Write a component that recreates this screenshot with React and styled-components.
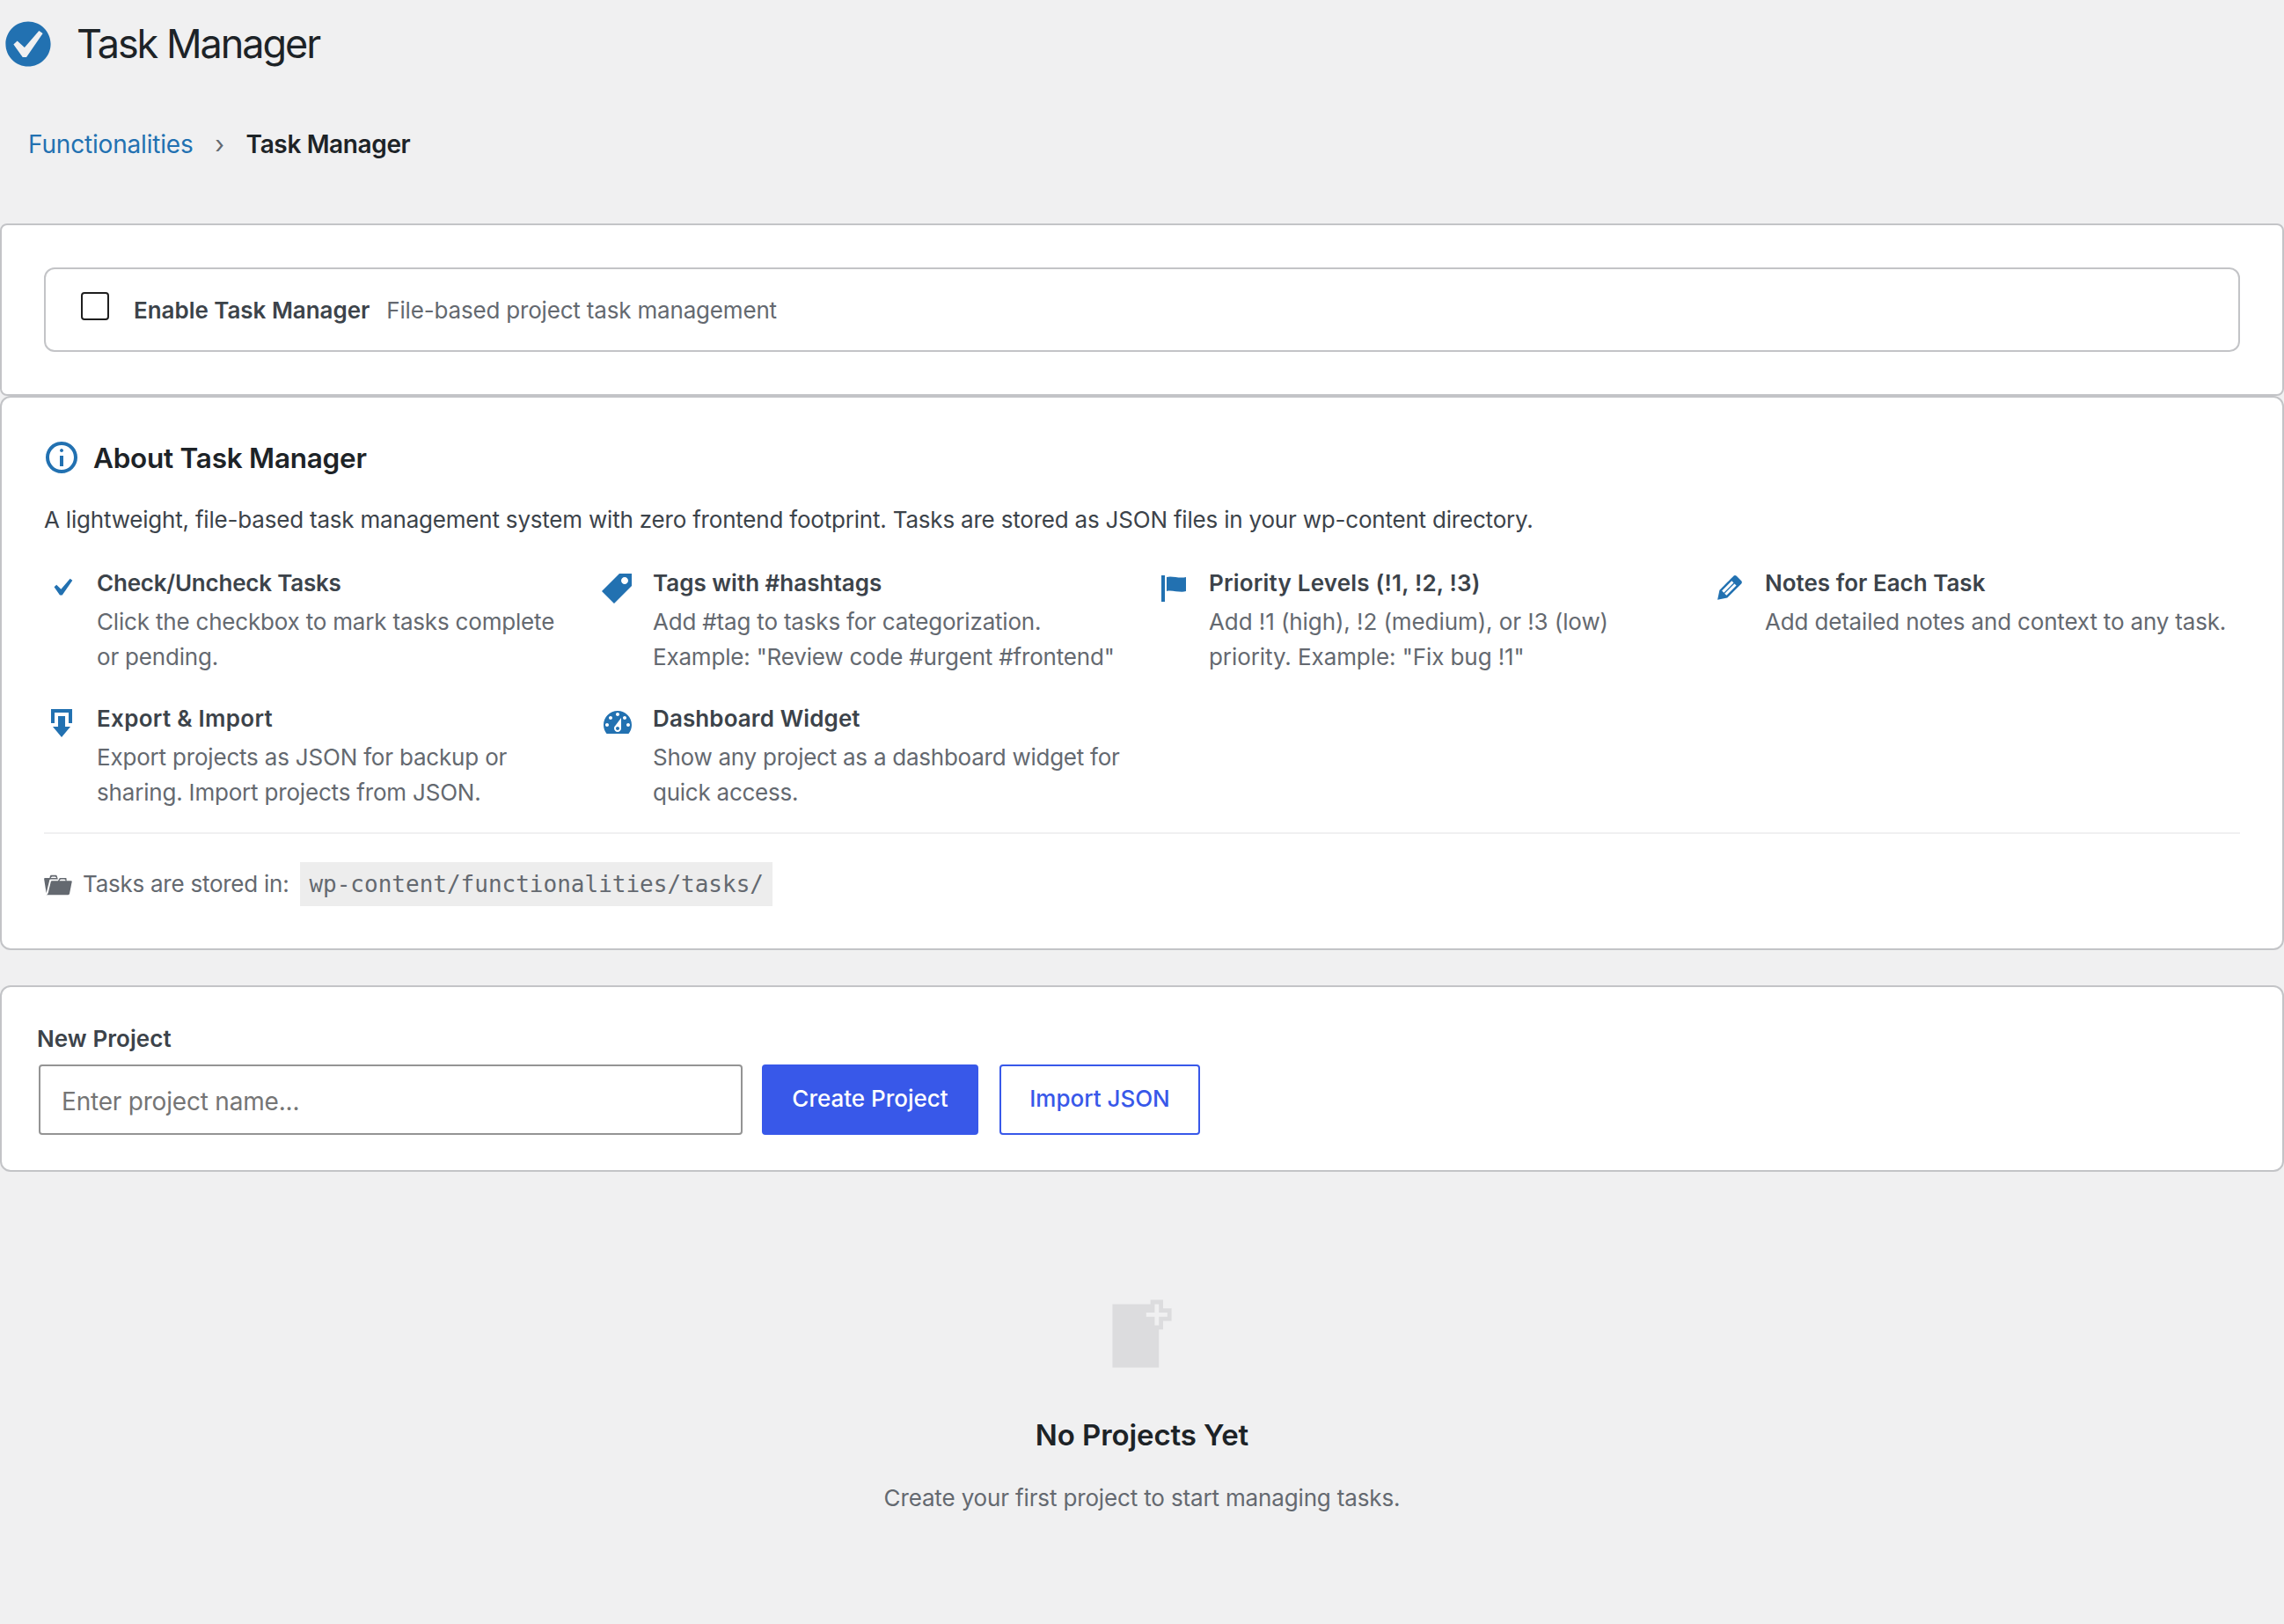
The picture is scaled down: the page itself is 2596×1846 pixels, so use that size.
import React from 'react'
import styled, { ThemeProvider, createGlobalStyle, css } from 'styled-components'

const theme = {
    colors: {
        page: '#f0f0f1',
        white: '#fff',
        heading: '#1d2327',
        text: '#3c434a',
        muted: '#646970',
        placeholder: '#757575',
        link: '#2271b1',
        primary: '#3858e9',
        border: '#c3c4c7',
        inputBorder: '#949494',
        faded: '#dcdcde'
    },
    fonts: {
        body: 'Inter, "Liberation Sans", sans-serif',
        code: '"DejaVu Sans Mono", monospace'
    }
}

const GlobalStyle = createGlobalStyle`
    * {
        box-sizing: border-box;
    }

    body {
        margin: 0;
        background-color: ${theme.colors.page};
        color: ${theme.colors.text};
        font-family: ${theme.fonts.body};
        font-size: 26px;
    }

    h1, h2, h3, h4, p {
        margin: 0;
    }
`

const Page = styled.div`
    min-height: 1846px;
    padding-top: 18px;
`

const Svg = styled.svg`
    display: block;
    flex: none;
    width: ${({ $size }) => $size}px;
    height: ${({ $size }) => $size}px;
    fill: ${({ $color, theme }) => theme.colors[$color]};
`

const Header = styled.header`
    display: flex;
    align-items: center;
    gap: 23px;
    height: 64px;
`

const PageTitle = styled.h1`
    color: ${({ theme }) => theme.colors.heading};
    font-size: 45px;
    font-weight: 400;
    line-height: 54px;
    letter-spacing: -2.05px;
    white-space: nowrap;
`

const Breadcrumb = styled.nav`
    display: flex;
    margin: 62px 0 70px;
    padding-left: 32px;
    font-size: 28px;
    line-height: 40px;

    > a {
        color: ${({ theme }) => theme.colors.link};
        letter-spacing: -.18px;
        text-decoration: none;
    }

    > span {
        width: 60px;
        color: ${({ theme }) => theme.colors.muted};
        text-align: center;
    }

    > strong {
        color: ${({ theme }) => theme.colors.heading};
        font-weight: 600;
        letter-spacing: -.37px;
    }
`

const Card = styled.section`
    margin-top: ${({ $spaced }) => $spaced ? 40 : 0}px;
    padding: ${({ $padding = 48 }) => $padding}px;
    border: 2px solid ${({ theme }) => theme.colors.border};
    border-radius: ${({ $radius = 12 }) => $radius}px;
    background-color: ${({ theme }) => theme.colors.white};
`

const EnableBox = styled.label`
    display: flex;
    align-items: center;
    height: 96px;
    padding: 0 40px;
    border: 2px solid ${({ theme }) => theme.colors.border};
    border-radius: 12px;
    line-height: 31px;

    > strong {
        margin: 0 19px 0 28px;
        font-weight: 600;
        letter-spacing: -.04px;
    }

    > span {
        color: ${({ theme }) => theme.colors.muted};
        letter-spacing: -.18px;
    }
`

const Checkbox = styled.input.attrs({ type: 'checkbox' })`
    appearance: none;
    width: 32px;
    height: 32px;
    margin: 0 0 8px;
    border: 2px solid #1e1e1e;
    border-radius: 4px;
    background-color: ${({ theme }) => theme.colors.white};
`

const SectionTitle = styled.h2`
    display: flex;
    align-items: center;
    gap: 16px;
    height: 40px;
    color: ${({ theme }) => theme.colors.heading};
    font-size: 31.5px;
    font-weight: 600;
    letter-spacing: -.25px;
`

const Intro = styled.p`
    margin-top: 31px;
    line-height: 39px;
    letter-spacing: -.2px;
`

const Features = styled.div`
    display: grid;
    grid-template-columns: repeat(4, 1fr);
    gap: 35px 32px;
    margin-top: 38px;
`

const FeatureItem = styled.div`
    display: flex;
    gap: 20px;

    h4 {
        font-size: 26px;
        font-weight: 600;
        line-height: 29px;
        letter-spacing: ${({ $titleTracking = 0 }) => $titleTracking}px;
    }

    p {
        margin-top: 10px;
        color: ${({ theme }) => theme.colors.muted};
        line-height: 40px;
        letter-spacing: ${({ $textTracking = -.19 }) => $textTracking}px;
    }
`

const Storage = styled.div`
    display: flex;
    align-items: flex-start;
    gap: 12px;
    margin-top: 25px;
    padding-top: 32px;
    border-top: 2px solid ${({ theme }) => theme.colors.page};
    color: ${({ theme }) => theme.colors.muted};
    line-height: 49px;
    letter-spacing: -.25px;

    > svg {
        margin-top: 10px;
    }

    > code {
        margin-left: 1px;
        padding: 6px 10px;
        background-color: rgba(0, 0, 0, .07);
        font-family: ${({ theme }) => theme.fonts.code};
        font-size: 26px;
        line-height: 38px;
        letter-spacing: 0;
    }
`

const Label = styled.label`
    display: block;
    margin-bottom: 11px;
    font-weight: 600;
    line-height: 37px;
    letter-spacing: .07px;
`

const FormRow = styled.div`
    display: flex;
    padding-left: 2px;
`

const TextInput = styled.input.attrs({ type: 'text' })`
    width: 800px;
    height: 80px;
    margin-right: 22px;
    padding: 4px 24px 0;
    border: 2px solid ${({ theme }) => theme.colors.inputBorder};
    border-radius: 4px;
    font-family: inherit;
    font-size: 28px;
    letter-spacing: -.2px;

    &::placeholder {
        color: ${({ theme }) => theme.colors.placeholder};
        opacity: 1;
    }
`

const Button = styled.button`${props => {
    const { colors } = props.theme;
    return css`
        width: ${props.$width}px;
        height: 80px;
        margin-right: 24px;
        padding: 0 0 3px;
        border: 2px solid ${colors.primary};
        border-radius: 4px;
        background-color: ${props.$primary ? colors.primary : colors.white};
        color: ${props.$primary ? colors.white : colors.primary};
        font-family: inherit;
        font-size: 26px;
        font-weight: 500;
        white-space: nowrap;
    `
}}`

const Empty = styled.div`
    display: flex;
    flex-direction: column;
    align-items: center;
    padding-top: 136px;

    > h3 {
        margin-top: 47px;
        color: ${({ theme }) => theme.colors.heading};
        font-size: 33px;
        font-weight: 600;
        line-height: 40px;
        letter-spacing: -.1px;
    }

    > p {
        margin-top: 36px;
        color: ${({ theme }) => theme.colors.muted};
        line-height: 31px;
        letter-spacing: -.15px;
    }
`

// all icons live on a 20x20 grid
const icons = {
    yesAlt: 'M10 2c-4.42 0-8 3.58-8 8s3.58 8 8 8 8-3.58 8-8-3.58-8-8-8zm-.615 12.66h-1.34l-3.24-4.54 1.341-1.25 2.569 2.4 5.141-5.931 1.34.94-5.811 8.381z',
    info: 'M9 15h2V9H9v6zm1-10c-.5 0-1 .5-1 1s.5 1 1 1 1-.5 1-1-.5-1-1-1zm0-4c-5 0-9 4-9 9s4 9 9 9 9-4 9-9-4-9-9-9zm0 16c-3.9 0-7-3.1-7-7s3.1-7 7-7 7 3.1 7 7-3.1 7-7 7z',
    yes: 'M14.83 4.89l1.34.94-5.81 8.38H9.02L5.78 9.67l1.34-1.25 2.57 2.4z',
    tag: 'M11 2h7v7L8 19l-7-7zm3 6c1.1 0 2-.9 2-2s-.9-2-2-2-2 .9-2 2 .9 2 2 2z',
    flag: 'M5 18V3H3v15h2zm1-6V4c3-1 7 1 11 0v8c-3 1.27-8-1-11 0z',
    edit: 'M13.89 3.39l2.71 2.72c.46.46.42 1.24.03 1.64l-8.01 8.02-5.56 1.16 1.16-5.58s7.6-7.63 7.99-8.03c.39-.39 1.22-.39 1.68.07zm-2.73 2.79l-5.59 5.61 1.11 1.11 5.54-5.65zm-2.97 8.23l5.58-5.6-1.07-1.08-5.59 5.6z',
    download: 'M14.01 4v6h2V2H4v8h2.01V4h8zm-2 2v6h3l-5 6-5-6h3V6h4z',
    dashboard: 'M3.76 16h12.48c1.1-1.37 1.76-3.11 1.76-5 0-4.42-3.58-8-8-8s-8 3.58-8 8c0 1.89.66 3.63 1.76 5zM10 4c.55 0 1 .45 1 1s-.45 1-1 1-1-.45-1-1 .45-1 1-1zM6 6c.55 0 1 .45 1 1s-.45 1-1 1-1-.45-1-1 .45-1 1-1zm8 0c.55 0 1 .45 1 1s-.45 1-1 1-1-.45-1-1 .45-1 1-1zm-5.37 5.55L12 7v6c0 1.1-.9 2-2 2s-2-.9-2-2c0-.57.24-1.08.63-1.45zM4 10c.55 0 1 .45 1 1s-.45 1-1 1-1-.45-1-1 .45-1 1-1zm12 0c.55 0 1 .45 1 1s-.45 1-1 1-1-.45-1-1 .45-1 1-1zm-5 3c0-.55-.45-1-1-1s-1 .45-1 1 .45 1 1 1 1-.45 1-1z',
    portfolio: 'M4 5H.78c-.37 0-.74.32-.69.84l1.56 9.99S3.5 8.47 3.86 6.7c.11-.53.61-.7.98-.7H10s-.7-2.08-.77-2.31C9.11 3.25 8.89 3 8.45 3H5.14c-.36 0-.7.23-.8.64C4.25 4.04 4 5 4 5zm4.88 0h-4s.42-1 .87-1h2.13c.48 0 1 1 1 1zM2.67 16.25c-.31.47-.76.75-1.26.75h15.73c.54 0 .92-.31 1.03-.83.44-2.19 1.68-8.44 1.68-8.44.07-.5-.3-.73-.62-.73H16V5.53c0-.16-.26-.53-.66-.53h-3.76c-.52 0-.87.58-.87.58L10 7H5.59c-.32 0-.63.19-.69.5 0 0-1.59 6.7-1.72 7.33-.07.37-.22.99-.51 1.42zM15.38 7H11s.58-1 1.13-1h2.29c.71 0 .96 1 .96 1z',
    addPage: 'M17 7V4h-2V2h-3v1H3v15h11V9h1V7h2zm-1-2v1h-2v2h-1V6h-2V5h2V3h1v2h2z'
}

const features = [
    {
        icon: 'yes',
        title: 'Check/Uncheck Tasks',
        text: ['Click the checkbox to mark tasks complete', 'or pending.'],
        titleTracking: -.22
    },
    {
        icon: 'tag',
        title: 'Tags with #hashtags',
        text: ['Add #tag to tasks for categorization.', 'Example: "Review code #urgent #frontend"']
    },
    {
        icon: 'flag',
        title: 'Priority Levels (!1, !2, !3)',
        text: ['Add !1 (high), !2 (medium), or !3 (low)', 'priority. Example: "Fix bug !1"'],
        titleTracking: .2,
        textTracking: -.08
    },
    {
        icon: 'edit',
        title: 'Notes for Each Task',
        text: ['Add detailed notes and context to any task.'],
        textTracking: -.17
    },
    {
        icon: 'download',
        title: 'Export & Import',
        text: ['Export projects as JSON for backup or', 'sharing. Import projects from JSON.'],
        titleTracking: .3
    },
    {
        icon: 'dashboard',
        title: 'Dashboard Widget',
        text: ['Show any project as a dashboard widget for', 'quick access.'],
        titleTracking: .1,
        textTracking: -.25
    }
]

const Icon = ({ name, size = 40, color = 'link' }) => (
    <Svg viewBox="0 0 20 20" aria-hidden="true" $size={size} $color={color}>
        <path fillRule="evenodd" d={icons[name]}/>
    </Svg>
)

const Feature = ({ icon, title, text, titleTracking, textTracking }) => (
    <FeatureItem $titleTracking={titleTracking} $textTracking={textTracking}>
        <Icon name={icon}/>
        <div>
            <h4>{title}</h4>
            <p>
                {text.map((line, i) => (
                    <React.Fragment key={line}>
                        {i > 0 && <br/>}
                        {line}
                    </React.Fragment>
                ))}
            </p>
        </div>
    </FeatureItem>
)

export default function App() {
    return (
        <ThemeProvider theme={theme}>
            <GlobalStyle/>
            <Page>
                <Header>
                    <Icon name="yesAlt" size={64}/>
                    <PageTitle>Task Manager</PageTitle>
                </Header>
                <Breadcrumb>
                    <a href="#functionalities">Functionalities</a>
                    <span>›</span>
                    <strong>Task Manager</strong>
                </Breadcrumb>
                <Card $radius={8}>
                    <EnableBox>
                        <Checkbox/>
                        <strong>Enable Task Manager</strong>
                        <span>File-based project task management</span>
                    </EnableBox>
                </Card>
                <Card>
                    <SectionTitle>
                        <Icon name="info"/>
                        About Task Manager
                    </SectionTitle>
                    <Intro>A lightweight, file-based task management system with zero frontend footprint. Tasks are stored as JSON files in your wp-content directory.</Intro>
                    <Features>
                        {features.map(feature => <Feature key={feature.icon} {...feature}/>)}
                    </Features>
                    <Storage>
                        <Icon name="portfolio" size={32} color="muted"/>
                        <span>Tasks are stored in:</span>
                        <code>wp-content/functionalities/tasks/</code>
                    </Storage>
                </Card>
                <Card $spaced $padding={40}>
                    <Label htmlFor="project-name">New Project</Label>
                    <FormRow>
                        <TextInput id="project-name" placeholder="Enter project name..."/>
                        <Button $primary $width={246}>Create Project</Button>
                        <Button $width={228}>Import JSON</Button>
                    </FormRow>
                </Card>
                <Empty>
                    <Icon name="addPage" size={96} color="faded"/>
                    <h3>No Projects Yet</h3>
                    <p>Create your first project to start managing tasks.</p>
                </Empty>
            </Page>
        </ThemeProvider>
    )
}
